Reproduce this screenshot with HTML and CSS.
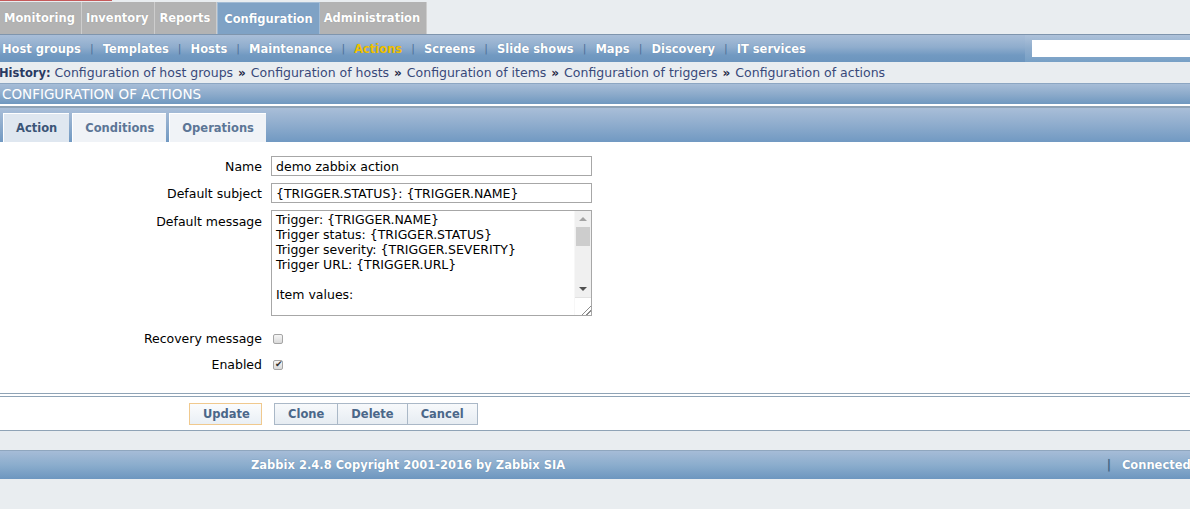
FILE: index.html
```html
<!DOCTYPE html>
<html lang="en">
<head>
    <meta charset="UTF-8">
    <title>Configuration of actions</title>
    <link rel="stylesheet" href="styles.css">
</head>
<body>
    <div class="topline"></div>

    <!-- main menu -->
    <div class="mainmenu">
        <a href="#">Monitoring</a>
        <a href="#">Inventory</a>
        <a href="#">Reports</a>
        <a href="#" class="active">Configuration</a>
        <a href="#">Administration</a>
    </div>

    <!-- sub menu -->
    <div class="submenu">
        <a href="#">Host groups</a><span class="sep">|</span>
        <a href="#">Templates</a><span class="sep">|</span>
        <a href="#">Hosts</a><span class="sep">|</span>
        <a href="#">Maintenance</a><span class="sep">|</span>
        <a href="#" class="current">Actions</a><span class="sep">|</span>
        <a href="#">Screens</a><span class="sep">|</span>
        <a href="#">Slide shows</a><span class="sep">|</span>
        <a href="#">Maps</a><span class="sep">|</span>
        <a href="#">Discovery</a><span class="sep">|</span>
        <a href="#">IT services</a>
        <div class="search"><input type="text"></div>
    </div>

    <div class="history">
        <b>History:</b>
        <a href="#">Configuration of host groups</a> <b class="raquo">&raquo;</b>
        <a href="#">Configuration of hosts</a> <b class="raquo">&raquo;</b>
        <a href="#">Configuration of items</a> <b class="raquo">&raquo;</b>
        <a href="#">Configuration of triggers</a> <b class="raquo">&raquo;</b>
        <a href="#">Configuration of actions</a>
    </div>

    <div class="header">CONFIGURATION OF ACTIONS</div>
    <div class="divider"></div>

    <!-- tabs -->
    <div class="tabs">
        <a href="#" class="tab selected">Action</a>
        <a href="#" class="tab">Conditions</a>
        <a href="#" class="tab">Operations</a>
    </div>

    <form class="form">
        <div class="row">
            <label for="name">Name</label>
            <input type="text" id="name" value="demo zabbix action">
        </div>
        <div class="row">
            <label for="subject">Default subject</label>
            <input type="text" id="subject" value="{TRIGGER.STATUS}: {TRIGGER.NAME}">
        </div>
        <div class="row row-top">
            <label for="message">Default message</label>
            <div class="textbox">
                <textarea id="message">Trigger: {TRIGGER.NAME}
Trigger status: {TRIGGER.STATUS}
Trigger severity: {TRIGGER.SEVERITY}
Trigger URL: {TRIGGER.URL}

Item values:

1. {ITEM.NAME1} ({HOST.NAME1}:{ITEM.KEY1}): {ITEM.VALUE1}
2. {ITEM.NAME2} ({HOST.NAME2}:{ITEM.KEY2}): {ITEM.VALUE2}
3. {ITEM.NAME3} ({HOST.NAME3}:{ITEM.KEY3}): {ITEM.VALUE3}

Original event ID: {EVENT.ID}</textarea>
                <div class="scrollbar">
                    <span class="arrow up"></span>
                    <span class="thumb"></span>
                    <span class="track"></span>
                    <span class="arrow down"></span>
                    <span class="grip"></span>
                </div>
            </div>
        </div>
        <div class="row row-check">
            <label for="recovery">Recovery message</label>
            <span><input type="checkbox" id="recovery" class="check"></span>
        </div>
        <div class="row row-check">
            <label for="enabled">Enabled</label>
            <span><input type="checkbox" id="enabled" class="check" checked></span>
        </div>
    </form>
    <div class="divider light"></div>

    <div class="buttons">
        <div class="main-btn">
            <button type="button" class="btn btn-main">Update</button>
        </div>
        <div class="btn-group">
            <button type="button" class="btn">Clone</button>
            <button type="button" class="btn">Delete</button>
            <button type="button" class="btn">Cancel</button>
        </div>
    </div>

    <div class="footer">
        <div class="copyright">Zabbix 2.4.8 Copyright 2001-2016 by Zabbix SIA</div>
        <div class="connected"><span class="sep">|</span>Connected</div>
    </div>
</body>
</html>
```

FILE: styles.css
```css
body {
    margin: 0;
    font-family: "DejaVu Sans", Verdana, sans-serif;
    font-size: 12.5px;
    background-color: #e9edf0;
    color: #000;
    overflow: hidden;
}
a {
    text-decoration: none;
}
.topline {
    width: 112px;
    height: 1px;
    background-color: #c65a5a;
    margin-bottom: 1px;
}

/* main menu */
.mainmenu {
    display: flex;
    height: 32px;
}
.mainmenu a {
    display: flex;
    align-items: center;
    padding: 0 6px 0 4px;
    background-color: #b3b3b3;
    border-right: 1px solid #cdcdcd;
    color: #fff;
    font-weight: bold;
    font-size: 11.5px;
    text-shadow: 0 0 1px #8d8d8d;
}
.mainmenu a.active {
    background-color: #7fa2c5;
    border: 1px solid #a2bbd4;
    border-bottom: none;
    padding: 0 6px;
    text-shadow: 0 0 1px #5a7ea3;
}

/* sub menu */
.submenu {
    display: flex;
    align-items: center;
    height: 27px;
    border-top: 1px solid #7f95ad;
    background: linear-gradient(#a9bed8, #8fadcd 45%, #7199c1 75%, #6c95be);
    padding-left: 2px;
}
.submenu a {
    color: #fff;
    font-weight: bold;
    font-size: 11.5px;
    text-shadow: 0 0 1px #56799e;
}
.submenu a.current {
    color: #f2c200;
}
.submenu .sep {
    color: #4e7098;
    margin: 0 9px;
    font-size: 11px;
}
.search {
    margin-left: auto;
    padding-left: 7px;
    height: 27px;
    display: flex;
    align-items: center;
    background: linear-gradient(#aec2da, #8eaccc 50%, #77a0c6);
}
.search input {
    width: 158px;
    height: 17px;
    border: none;
    padding: 0;
    margin: 0;
    background: #fff;
}

/* history */
.history {
    height: 21px;
    line-height: 21px;
    color: #34466f;
    white-space: nowrap;
}
.history b {
    color: #2a3a62;
    font-size: 11.5px;
    margin-left: -1px;
}
.history a {
    color: #38497a;
}
.history .raquo {
    color: #1f2845;
    font-size: 12px;
    margin: 0 1px;
}

.header {
    height: 20px;
    line-height: 20px;
    border-top: 1px solid #8ca6c2;
    background: linear-gradient(#a7bdd7, #8dabcb 50%, #6f98c0);
    color: #fff;
    font-size: 13.5px;
    padding-left: 2px;
}
.divider {
    height: 2px;
    background-color: #fff;
    border-bottom: 2px solid #8ea2b6;
}
.divider.light {
    height: 2px;
    border-top: 1px solid #8fa3b6;
    border-bottom: 1px solid #8fa3b6;
}

/* tabs */
.tabs {
    display: flex;
    gap: 3px;
    height: 29px;
    padding: 5px 0 0 3px;
    background: linear-gradient(#a9bed8, #8eaccd 50%, #7199c2);
}
.tab {
    display: flex;
    align-items: center;
    padding: 0 12px;
    background-color: #f0f3f7;
    border-top: 1px solid #fff;
    border-left: 1px solid #fff;
    color: #5c7696;
    font-weight: bold;
    font-size: 11.5px;
}
.tab.selected {
    background-color: #dfe7f0;
    color: #3b5577;
}

/* form */
.form {
    background-color: #fff;
    padding: 11px 0 16px;
    margin: 0;
}
.row {
    display: grid;
    grid-template-columns: 262px 321px;
    column-gap: 9px;
    align-items: center;
    padding: 3px 0 4px;
}
.row label {
    text-align: right;
}
.row input[type="text"] {
    height: 20px;
    box-sizing: border-box;
    border: 1px solid #a7a7a7;
    padding: 0 4px;
    font-family: "DejaVu Sans", Verdana, sans-serif;
    font-size: 12.5px;
    margin: 0;
}
.row-top {
    align-items: start;
    padding-bottom: 9px;
}
.row-top label {
    padding-top: 4px;
}

/* textarea with its scrollbar */
.textbox {
    display: flex;
    height: 106px;
    box-sizing: border-box;
    border: 1px solid #a7a7a7;
}
.textbox textarea {
    flex: 1;
    border: none;
    padding: 1px 4px;
    margin: 0;
    font-family: "DejaVu Sans", Verdana, sans-serif;
    font-size: 12.5px;
    line-height: 15px;
    resize: none;
    overflow: hidden;
    outline: none;
}
.scrollbar {
    width: 16px;
    display: flex;
    flex-direction: column;
    background-color: #f0f0f0;
    border-left: 1px solid #f7f7f7;
}
.scrollbar .arrow {
    height: 16px;
    display: flex;
    align-items: center;
    justify-content: center;
}
.scrollbar .arrow::before {
    content: "";
    border-left: 4px solid transparent;
    border-right: 4px solid transparent;
}
.scrollbar .up::before {
    border-bottom: 4px solid #a3a3a3;
}
.scrollbar .down::before {
    border-top: 4px solid #505050;
}
.scrollbar .thumb {
    height: 19px;
    margin: 0 1px;
    background-color: #cdcdcd;
}
.scrollbar .track {
    flex: 1;
}
.scrollbar .grip {
    height: 17px;
    background: linear-gradient(135deg, transparent 70%, #8a8a8a 70%, #8a8a8a 74%, transparent 74%, transparent 84%, #8a8a8a 84%, #8a8a8a 88%, transparent 88%), #fff;
    border-top: 1px solid #e2e2e2;
}

.row-check {
    padding: 3px 0;
    height: 20px;
}
.check {
    appearance: none;
    -webkit-appearance: none;
    width: 10px;
    height: 10px;
    margin: 0 0 0 2px;
    border: 1px solid #a5a5a5;
    border-radius: 2px;
    background: linear-gradient(#f6f6f6, #dadada);
    position: relative;
    vertical-align: middle;
}
.check:checked::after {
    content: "\2714";
    position: absolute;
    left: 1px;
    top: -2px;
    font-size: 9px;
    color: #333;
}

/* buttons */
.buttons {
    display: grid;
    grid-template-columns: 262px auto;
    column-gap: 12px;
    background-color: #fff;
    padding: 6px 0 5px;
    border-bottom: 1px solid #8fa3b6;
    margin-bottom: 19px;
}
.main-btn {
    text-align: right;
}
.btn {
    height: 22px;
    padding: 0 13px;
    border: 1px solid #aab8c7;
    background: linear-gradient(#f7f9fb, #e6ecf2);
    color: #4b6789;
    font-family: "DejaVu Sans", Verdana, sans-serif;
    font-weight: bold;
    font-size: 11.5px;
    margin: 0;
}
.btn-main {
    width: 73px;
    border-color: #f0c98e;
    background: linear-gradient(#fbfcfd, #e9eff5);
}
.btn-group {
    display: flex;
}
.btn-group .btn + .btn {
    border-left: none;
}

/* footer */
.footer {
    display: flex;
    align-items: center;
    height: 28px;
    border-top: 1px solid #8fa6be;
    background: linear-gradient(#a6bcd7, #8badcd 50%, #6d96bf);
    color: #fff;
    font-weight: bold;
    font-size: 11.5px;
    text-shadow: 0 0 1px #587ca2;
}
.copyright {
    padding-left: 251px;
    flex: 1;
}
.connected {
    width: 83px;
    white-space: nowrap;
}
.connected .sep {
    color: #3c5b7c;
    font-weight: normal;
    margin-right: 11px;
}
```
